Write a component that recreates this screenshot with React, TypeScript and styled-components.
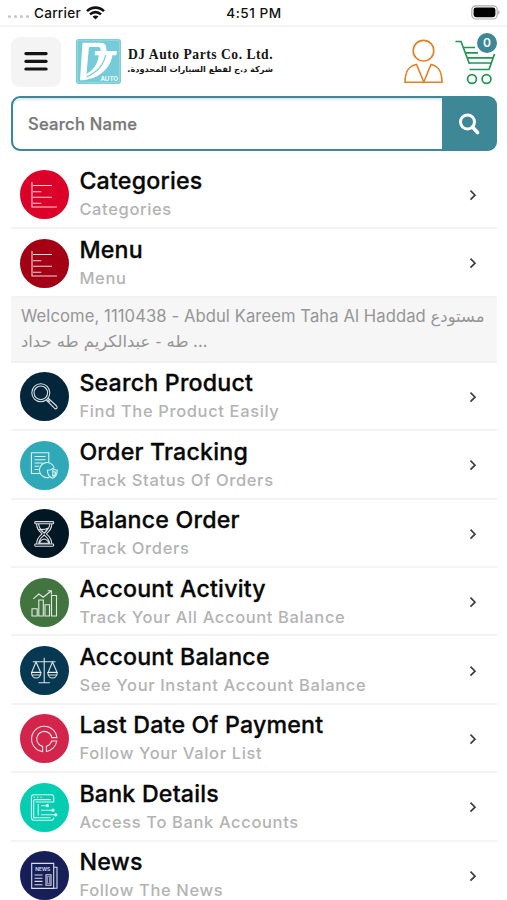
import React from "react";
import styled, { createGlobalStyle } from "styled-components";

const Global = createGlobalStyle`
  * { box-sizing: border-box; }
  body { margin: 0; background: #fff; overflow: hidden; font-family: Inter, "DejaVu Sans", sans-serif; }
`;

const Screen = styled.main`
  width: 507px;
  height: 900px;
  overflow: hidden;
  background: #fff;
`;

const StatusBar = styled.div`
  height: 27px;
  border-bottom: 2px solid #f4f4f4;
  display: grid;
  grid-template-columns: 1fr auto 1fr;
  align-items: center;
  padding: 0 7px 0 8px;
  font-size: 13.6px;
  font-weight: 500;
  color: #111;
`;

const Carrier = styled.div`
  display: flex;
  align-items: center;
  gap: 5px;
`;

const Dots = styled.span`
  display: flex;
  gap: 3px;
  padding-top: 8px;
`;

const Dot = styled.i`
  width: 3px;
  height: 3px;
  border-radius: 50%;
  background: #c4c4c4;
`;

const CarrierName = styled.span`
  letter-spacing: 0.25px;
`;

const Clock = styled.span`
  letter-spacing: 0.5px;
`;

const BatterySlot = styled.div`
  display: flex;
  justify-content: flex-end;
`;

const Header = styled.header`
  height: 69px;
  display: flex;
  align-items: center;
  padding: 0 10px 0 11px;
`;

const MenuButton = styled.button`
  width: 50px;
  height: 50px;
  border: 0;
  border-radius: 9px;
  background: #f4f4f4;
  padding: 0;
  display: grid;
  place-items: center;
`;

const Brand = styled.div`
  margin-left: 15px;
  display: flex;
  gap: 7px;
  align-items: center;
  flex: 1;
`;

const BrandText = styled.div`
  width: 145px;
`;

const BrandName = styled.div`
  font: bold 13.6px/15px "Liberation Serif", serif;
  letter-spacing: 0.52px;
  white-space: nowrap;
  color: #161616;
`;

const BrandArabic = styled.div`
  font: bold 8.2px/14px "DejaVu Sans", sans-serif;
  white-space: nowrap;
  color: #161616;
`;

const Actions = styled.div`
  display: flex;
  gap: 12px;
`;

const CartButton = styled.div`
  position: relative;
  width: 42px;
  height: 48px;
`;

const Badge = styled.span`
  position: absolute;
  top: -5px;
  right: 0;
  width: 20px;
  height: 20px;
  border-radius: 50%;
  background: #3d8797;
  color: #fff;
  font-size: 12px;
  line-height: 20px;
  font-weight: 600;
  text-align: center;
`;

const SearchBar = styled.div`
  height: 55px;
  margin: 0 10px 0 11px;
  border: 2px solid #3d8797;
  border-radius: 9px;
  background: #3d8797;
  display: flex;
  overflow: hidden;
`;

const SearchField = styled.div`
  flex: 1;
  background: #fff;
  border-radius: 7px 0 0 7px;
  box-shadow: inset 0 2px 2px #e0e5e8;
  padding-left: 15px;
  line-height: 53px;
  font-size: 16.6px;
  font-weight: 500;
  letter-spacing: 0.24px;
  -webkit-text-stroke: 0.25px currentColor;
  color: #777;
`;

const SearchButton = styled.div`
  width: 53px;
  display: grid;
  place-items: center;
`;

const List = styled.div`
  margin: 9.8px 10px 0 11px;
`;

const Row = styled.div`
  height: 68.4px;
  border-bottom: 2px solid #f3f3f3;
  display: flex;
  align-items: center;
  padding: 0 20px 0 9.4px;
`;

const Disc = styled.svg<{ $bg: string }>`
  width: 49px;
  height: 49px;
  border-radius: 50%;
  background: ${(p) => p.$bg};
  flex: none;
  margin-top: 2px;
`;

const Labels = styled.div`
  flex: 1;
  margin-left: 10px;
  padding-top: 1px;
`;

const Title = styled.div`
  font-size: 23.2px;
  line-height: 30px;
  font-weight: 500;
  color: #080808;
  letter-spacing: 0.2px;
  -webkit-text-stroke: 0.3px currentColor;
  white-space: nowrap;
`;

const Subtitle = styled.div`
  font-size: 16.5px;
  line-height: 26px;
  font-weight: 500;
  color: #b3b3b3;
  letter-spacing: 0.63px;
  white-space: nowrap;
`;

const Welcome = styled.div`
  height: 65.2px;
  background: #f6f6f6;
  border-bottom: 2px solid #f1f1f1;
  padding: 5px 0 0 10px;
  font-size: 16.6px;
  line-height: 26px;
  color: #959595;
  white-space: nowrap;
`;

const WelcomeLine = styled.div`
  height: 25.4px;
  letter-spacing: 0.09px;
`;

const Arabic = styled.span`
  font-family: "DejaVu Sans", sans-serif;
  font-size: 16.4px;
  letter-spacing: 0;
`;

const icons: Record<string, React.ReactNode> = {
  bars: <path d="M12 12v25h25M13 15.5h19M13 21.8h8.3M13 27.3h19M13 33.3h8.3" />,
  search: (
    <>
      <circle cx="20.8" cy="20.8" r="9" />
      <circle cx="20.8" cy="20.8" r="6.8" />
      <path d="M26.2 28l8.2 8.2c2 1.6 3.6-.6 2.2-2.2L28 26M27.7 27.6l2.2 2.2" />
    </>
  ),
  order: (
    <>
      <path d="M20 32.5h-8.6V11.7h17.4v9.6M14.5 15.5h11M14.5 18.8h11M14.5 22h8M14.5 25.2h4.5M14.5 28.5h4" />
      <path d="M34.3 26.8a7.6 7.6 0 1 0-5 9.6" />
      <path d="M27.4 29.3c2.8 0 4.1-.7 5.5-2 1.2 1.3 2.3 1.8 4.3 2 0 4.2-1.2 6.8-4.7 8-3.8-1.5-5-4-5.1-8zM32.8 28.5v7M32.8 30.5l2.8.7c-.1 2-.8 3.4-2.8 4.3" />
    </>
  ),
  hourglass: (
    <>
      <rect x="14.8" y="12.6" width="18.8" height="2.2" rx=".6" />
      <rect x="14.8" y="35" width="18.8" height="2.2" rx=".6" />
      <path d="M16.6 15c0 5 2.4 7 5.4 9.8-3 2.6-5.4 5-5.4 10M31.8 15c0 5-2.4 7-5.4 9.8 3 2.6 5.4 5 5.4 10M18.7 15c0 4.500 2.400 6.200 5.500 9.200 3.100-3 5.500-4.700 5.500-9.200M18.700 34.800c.2-4.400 2.400-5.800 5.500-8.800 3.100 3 5.300 4.400 5.500 8.800M20 20.600l4.200-.2 3.800-1.300-3.800 5zM19.600 34.200c1-3.200 3-4 4.600-4.200 2 .3 3.600 1.200 4.600 4.200z" />
    </>
  ),
  activity: (
    <path d="M12 30.7h5.2V38H12zM18.8 22h4.5v16h-4.5zM25 26.7h4.5V38H25zM31.5 17.5h5V38h-5zM13.3 20.8l5.5-4.8 4.5 3.2 7.4-5.9M27.7 12.8h3.7v3.8" />
  ),
  scales: (
    <>
      <path d="M24.2 11.7v25M18.5 36.7h11.4M12.8 15.8h22.7M16 16l-4.3 10.3h8.9zM32.5 16l-4.3 10.3H37z" />
      <path d="M11.5 26.5h9.4c0 7.4-9.4 7.4-9.4 0zM27.8 26.5h9.4c0 7.4-9.4 7.4-9.4 0zM12.3 29h7.8M28.6 29h7.8" />
    </>
  ),
  ring: (
    <>
      <path d="M36.9 23.6A12.7 12.7 0 1 0 22.6 37.6V32.4A7.6 7.6 0 1 1 31.8 23.6z" />
      <path d="M36.8 27H31.6A7.6 7.6 0 0 1 26.4 32.3V37.5A12.7 12.7 0 0 0 36.8 27z" />
    </>
  ),
  bank: (
    <>
      <path d="M33.8 19v-4.6c0-1.8-.8-2.6-2.6-2.6H14c-1.8 0-2.6.8-2.6 2.6v20.2c0 1.8.8 2.6 2.6 2.6h17.2c1.800 0 2.600-1 2.600-2.600M33.800 19H15.500M13.700 16.600h17M13.700 17v17.800h17M18.200 21v11.500M13.500 14.200h1.400M17 14.200h1.400M20.500 14.200h1.400" />
      <path d="M21 22.7h7M21 27.2h12M21 31.8h14.8" />
      <circle cx="27.5" cy="22.7" r="1.1" fill="#fff" />
      <circle cx="33" cy="27.2" r="1.1" fill="#fff" />
      <circle cx="35.8" cy="31.8" r="1.1" fill="#fff" />
    </>
  ),
  news: (
    <>
      <path d="M11.7 12.4h22v25h-22zM34 16.3h3v21h-4M14.5 24h8M14.5 27.2h8M14.5 30.4h8M14.5 33.8h8M26 23.7h5v10.5h-5z" />
      <path d="M27.5 25.5h2v7h-2z" opacity=".6" />
      <text x="15.3" y="20" fontSize="5" fontWeight="600" fill="#dfe3f5" stroke="none" fontFamily="Inter" textLength="15" lengthAdjust="spacingAndGlyphs">NEWS</text>
    </>
  ),
};

interface Item {
  icon: string;
  bg: string;
  title: string;
  sub: string;
}

const top: Item[] = [
  { icon: "bars", bg: "#db0128", title: "Categories", sub: "Categories" },
  { icon: "bars", bg: "#a40015", title: "Menu", sub: "Menu" },
];

const rest: Item[] = [
  { icon: "search", bg: "#03263b", title: "Search Product", sub: "Find The Product Easily" },
  { icon: "order", bg: "#2fa9b8", title: "Order Tracking", sub: "Track Status Of Orders" },
  { icon: "hourglass", bg: "#021724", title: "Balance Order", sub: "Track Orders" },
  { icon: "activity", bg: "#427440", title: "Account Activity", sub: "Track Your All Account Balance" },
  { icon: "scales", bg: "#063852", title: "Account Balance", sub: "See Your Instant Account Balance" },
  { icon: "ring", bg: "#d3254b", title: "Last Date Of Payment", sub: "Follow Your Valor List" },
  { icon: "bank", bg: "#05cdb2", title: "Bank Details", sub: "Access To Bank Accounts" },
  { icon: "news", bg: "#161f58", title: "News", sub: "Follow The News" },
];

const ListRow = ({ item }: { item: Item }) => (
  <Row>
    <Disc $bg={item.bg} viewBox="0 0 49 49" fill="none" stroke="#fff" strokeOpacity=".85" strokeWidth="1.1">
      {icons[item.icon]}
    </Disc>
    <Labels>
      <Title>{item.title}</Title>
      <Subtitle>{item.sub}</Subtitle>
    </Labels>
    <svg width="8" height="14" viewBox="0 0 8 14" fill="none" stroke="#3c4046" strokeWidth="1.7">
      <path d="M1.5 3.7L6 8.2l-4.5 4.5" />
    </svg>
  </Row>
);

export default function App() {
  return (
    <Screen>
      <Global />
      <StatusBar>
        <Carrier>
          <Dots><Dot /><Dot /><Dot /><Dot /></Dots>
          <CarrierName>Carrier</CarrierName>
          <svg width="19" height="14" viewBox="0 0 19 14" fill="none" stroke="#111" strokeWidth="2.6">
            <path d="M1 5.2c4.8-4.8 12.2-4.8 17 0M4 8.4c3.2-3 7.8-3 11 0" />
            <path d="M6.5 10.6c1.8-1.5 4.2-1.5 6 0L9.5 13.6z" fill="#111" stroke="none" />
          </svg>
        </Carrier>
        <Clock>4:51 PM</Clock>
        <BatterySlot>
          <svg width="29" height="15" viewBox="0 0 29 15">
            <rect x=".8" y=".8" width="25.4" height="13.2" rx="4" fill="#fff" stroke="#aaa" strokeWidth="1.2" />
            <rect x="2.6" y="2.6" width="21.8" height="9.6" rx="2.4" fill="#000" />
            <path d="M27.3 5.3c1.6.6 1.6 3.6 0 4.2z" fill="#999" />
          </svg>
        </BatterySlot>
      </StatusBar>
      <Header>
        <MenuButton aria-label="Menu">
          <svg width="24" height="22" viewBox="0 0 24 22" stroke="#151515" strokeWidth="3.2" strokeLinecap="round">
            <path d="M1.9 2.6h20.2M1.9 10.3h20.2M1.9 18h20.2" />
          </svg>
        </MenuButton>
        <Brand>
          <svg width="45" height="45" viewBox="0 0 45 45">
            <rect width="45" height="45" rx="3" fill="#76cbd9" />
            <rect x="1.3" y="1.3" width="42.4" height="42.4" rx="2" fill="none" stroke="#a6dfe7" strokeWidth=".7" />
            <path d="M6.5 3.8H25Q31 3.8 30.5 12H41L40.3 16.2H36.5C34 30 22 41 4 41.3z" fill="#fff" />
            <path d="M13 8H22.5Q25 8 24.6 12H19.3L18.6 16.2H22.8C22 24 18 31 10.5 34.8z" fill="#76cbd9" />
            <path d="M29.6 16.2C27.5 26 22 33 10.5 38" fill="none" stroke="#76cbd9" strokeWidth="1.2" />
            <text x="24.5" y="41.8" fontFamily="Inter" fontSize="6.5" fontWeight="600" fill="#fff" textLength="17.5" lengthAdjust="spacingAndGlyphs">AUTO</text>
          </svg>
          <BrandText>
            <BrandName>DJ Auto Parts Co. Ltd.</BrandName>
            <BrandArabic dir="rtl">شركة د.ج لقطع السيارات المحدودة.</BrandArabic>
          </BrandText>
        </Brand>
        <Actions>
          <svg width="39" height="48" viewBox="0 0 39 48" fill="none" stroke="#e08127" strokeWidth="1.6">
            <circle cx="19.5" cy="12.7" r="10.3" />
            <path d="M12.500 26.500C5 28 1 32.500 1 44.300h37C38 32.500 34 28 27 26.500L19.800 44z" />
          </svg>
          <CartButton>
            <svg width="42" height="48" viewBox="0 0 42 48" fill="none" stroke="#219653" strokeWidth="1.7">
              <path d="M.5 3.500H6l8.500 22.500M8.500 9.500H20M11 14.800h12M12.500 19.800h25M14.500 25h22M39.500 16l-5.500 15.500H14.500" />
              <circle cx="17" cy="41" r="4.4" />
              <circle cx="31.5" cy="41" r="4.4" />
            </svg>
            <Badge>0</Badge>
          </CartButton>
        </Actions>
      </Header>
      <SearchBar>
        <SearchField>Search Name</SearchField>
        <SearchButton>
          <svg width="22" height="22" viewBox="0 0 22 22" fill="none" stroke="#fff">
            <circle cx="9.5" cy="9" r="7" strokeWidth="3" />
            <path d="M14.5 14l5 5.5" strokeWidth="3.6" strokeLinecap="round" />
          </svg>
        </SearchButton>
      </SearchBar>
      <List>
        {top.map((i) => <ListRow key={i.title} item={i} />)}
        <Welcome>
          <WelcomeLine>
            Welcome, 1110438 - Abdul Kareem Taha Al Haddad <Arabic>مستودع</Arabic>
          </WelcomeLine>
          <WelcomeLine>
            <Arabic>طه - عبدالكريم طه حداد</Arabic> ...
          </WelcomeLine>
        </Welcome>
        {rest.map((i) => <ListRow key={i.title} item={i} />)}
      </List>
    </Screen>
  );
}
